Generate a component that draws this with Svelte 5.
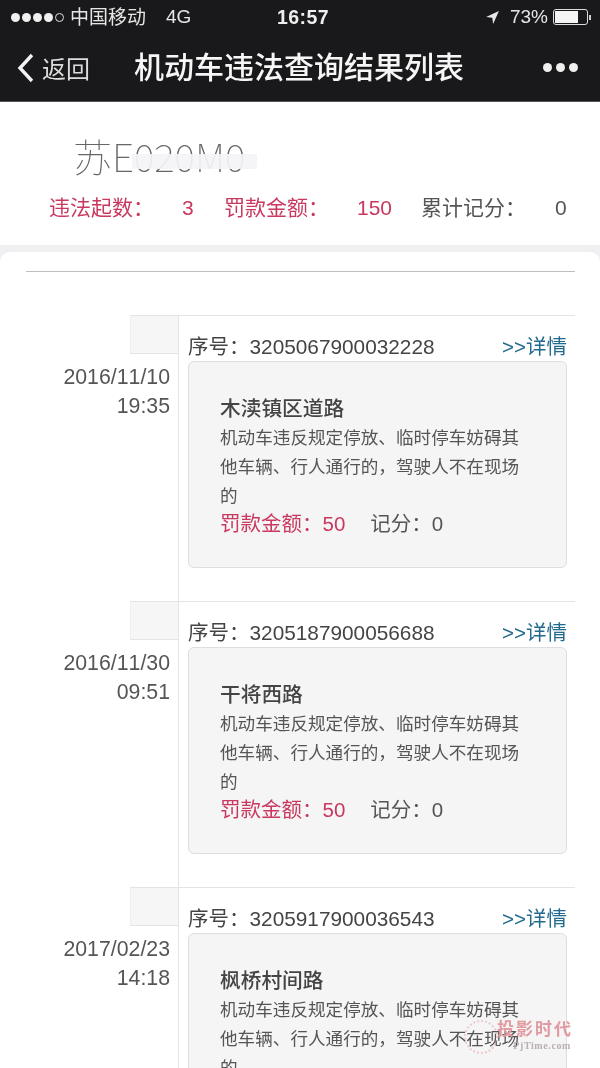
<script lang="ts">
    type Violation = {
        serial: string;
        date: string;
        time: string;
        road: string;
    };

    const colon = "\uFF1A";
    const reason = "机动车违反规定停放、临时停车妨碍其他车辆、行人通行的\uFF0C驾驶人不在现场的";

    const violations: Violation[] = [
        { serial: "3205067900032228", date: "2016/11/10", time: "19:35", road: "木渎镇区道路" },
        { serial: "3205187900056688", date: "2016/11/30", time: "09:51", road: "干将西路" },
        { serial: "3205917900036543", date: "2017/02/23", time: "14:18", road: "枫桥村间路" },
    ];
</script>

<div class="page">
    <header class="topbar">
        <div class="status">
            <div class="status-left">
                <span class="signal">
                    <i></i><i></i><i></i><i></i><i class="empty"></i>
                </span>
                <span class="carrier">中国移动</span>
                <span class="net">4G</span>
            </div>
            <div class="clock">16:57</div>
            <div class="status-right">
                <svg class="arrow" viewBox="0 0 14 14" width="15" height="15">
                    <path d="M13 1 L1 6.6 L6.8 7.2 L7.6 13 Z" fill="#e8e8e8" />
                </svg>
                <span>73%</span>
                <span class="battery"><span class="level"></span></span>
                <span class="nub"></span>
            </div>
        </div>
        <div class="nav">
            <div class="back">
                <svg viewBox="0 0 18 30" width="18" height="30">
                    <path d="M15 2 L3 15 L15 28" fill="none" stroke="#f2f2f2" stroke-width="3.4" />
                </svg>
                <span>返回</span>
            </div>
            <h1>机动车违法查询结果列表</h1>
            <div class="more"><i></i><i></i><i></i></div>
        </div>
    </header>

    <section class="summary">
        <div class="plate">
            苏E020M0
            <span class="smudge"></span>
        </div>
        <div class="totals">
            <span class="red">违法起数{colon}</span>
            <span class="red count-a">3</span>
            <span class="red">罚款金额{colon}</span>
            <span class="red count-b">150</span>
            <span>累计记分{colon}</span>
            <span class="count-c">0</span>
        </div>
    </section>

    <section class="panel">
        <div class="rule"></div>
        {#each violations as v}
            <article class="entry">
                <div class="when">
                    <div class="tab"></div>
                    <div class="stamp">{v.date}</div>
                    <div class="stamp">{v.time}</div>
                </div>
                <div class="body">
                    <div class="head">
                        <span>序号{colon}<span class="serial">{v.serial}</span></span>
                        <span class="link">&gt;&gt;详情</span>
                    </div>
                    <div class="card">
                        <div class="road">{v.road}</div>
                        <p class="reason">{reason}</p>
                        <div class="fine">
                            <span class="red">罚款金额{colon}50</span>
                            <span>记分{colon}0</span>
                        </div>
                    </div>
                </div>
            </article>
        {/each}
    </section>

    <div class="watermark">
        <span class="ring"></span>
        <div class="wm-cn">投影时代</div>
        <div class="wm-en">PjTime.com</div>
    </div>
</div>

<style>
    :global(body) {
        margin: 0;
        background: #fff;
    }

    .page {
        position: relative;
        width: 600px;
        height: 1068px;
        overflow: hidden;
        background: #f0f0f2;
        font-family: "Liberation Sans", "Noto Sans CJK SC", sans-serif;
        color: #444;
        filter: blur(0.35px);
    }

    .topbar {
        height: 102px;
        background: #19191b;
        border-bottom: 1px solid #555;
        box-sizing: border-box;
        color: #f2f2f2;
    }

    .status {
        display: grid;
        grid-template-columns: 1fr auto 1fr;
        align-items: center;
        height: 34px;
        padding: 0 9px 0 11px;
        font-size: 19px;
        color: #e6e6e6;
    }

    .status-left {
        display: flex;
        align-items: center;
        gap: 6px;
    }

    .signal {
        display: flex;
        gap: 2px;
    }

    .signal i {
        width: 9px;
        height: 9px;
        border-radius: 50%;
        background: #f0f0f0;
        box-sizing: border-box;
    }

    .signal i.empty {
        background: none;
        border: 1px solid #ddd;
    }

    .carrier {
        margin-bottom: 4px;
    }

    .net {
        margin-left: 14px;
    }

    .clock {
        margin-left: 4px;
        font-size: 19.5px;
        font-weight: 700;
        color: #eee;
        letter-spacing: 0.4px;
    }

    .status-right {
        display: flex;
        align-items: center;
        justify-content: flex-end;
        gap: 5px;
    }

    .arrow {
        margin-right: 5px;
    }

    .battery {
        display: block;
        width: 35px;
        height: 16px;
        border: 1px solid #ddd;
        border-radius: 3px;
        padding: 1px;
        box-sizing: border-box;
    }

    .level {
        display: block;
        width: 73%;
        height: 100%;
        background: #f4f4f4;
    }

    .nub {
        width: 2px;
        height: 5px;
        margin-left: -4px;
        background: #ccc;
    }

    .nav {
        display: flex;
        align-items: center;
        height: 67px;
        padding-left: 17px;
    }

    .back {
        display: flex;
        align-items: center;
        gap: 7px;
        width: 117px;
        flex-shrink: 0;
        font-size: 24px;
        color: #dcdcdc;
    }

    .nav h1 {
        margin: 0;
        font-size: 30px;
        font-weight: 500;
        line-height: 1;
        color: #f6f6f6;
        white-space: nowrap;
    }

    .more {
        display: flex;
        gap: 4px;
        margin-left: auto;
        margin-right: 22px;
    }

    .more i {
        width: 9px;
        height: 9px;
        border-radius: 50%;
        background: #f0f0f0;
    }

    .summary {
        height: 143px;
        box-sizing: border-box;
        padding-top: 30px;
        background: #fff;
    }

    .plate {
        position: relative;
        width: fit-content;
        margin-left: 73px;
        font-size: 39px;
        line-height: 46px;
        font-weight: 100;
        font-family: "Noto Sans CJK SC", sans-serif;
        color: #666;
    }

    .smudge {
        position: absolute;
        left: 59px;
        right: -12px;
        top: 22px;
        height: 15px;
        background: rgba(244, 244, 246, 0.92);
    }

    .totals {
        display: flex;
        align-items: center;
        margin-top: 15px;
        padding-left: 49px;
        font-size: 21px;
        line-height: 30px;
        color: #555;
    }

    .red {
        color: #c9385e;
    }

    .count-a {
        margin-left: 28px;
        width: 42px;
    }

    .count-b {
        margin-left: 28px;
        width: 64px;
    }

    .count-c {
        margin-left: 29px;
    }

    .panel {
        margin-top: 7px;
        padding: 19px 25px 0 0;
        min-height: 900px;
        background: #fff;
        border-radius: 10px 10px 0 0;
    }

    .rule {
        height: 1px;
        margin-left: 26px;
        margin-bottom: 43px;
        background: #bdbdbd;
    }

    .entry {
        display: flex;
        box-sizing: border-box;
        height: 286px;
        margin-left: 130px;
        border-top: 1px solid #e4e4e4;
    }

    .when {
        width: 48px;
        flex-shrink: 0;
        box-sizing: content-box;
        border-right: 1px solid #e4e4e4;
        font-size: 21.3px;
        line-height: 29px;
        font-kerning: none;
        color: #555;
    }

    .tab {
        height: 37px;
        margin-bottom: 9px;
        background: #f6f6f6;
        border-bottom: 1px solid #e4e4e4;
        box-shadow: inset 1px 0 0 #efefef;
    }

    .stamp {
        display: flex;
        justify-content: flex-end;
        padding-right: 8px;
        white-space: nowrap;
    }

    .body {
        flex: 1;
        padding: 14px 8px 0 9px;
        min-width: 0;
    }

    .head {
        display: flex;
        justify-content: space-between;
        align-items: center;
        height: 30px;
        margin-bottom: 1px;
        font-size: 20.5px;
        color: #444;
    }

    .serial {
        font-size: 20.8px;
    }

    .link {
        color: #236b8e;
    }

    .card {
        height: 207px;
        box-sizing: border-box;
        padding: 31px 32px 0 31px;
        background: #f5f5f6;
        border: 1px solid #dedede;
        border-radius: 6px;
    }

    .road {
        font-size: 20.7px;
        line-height: 31px;
        font-weight: 500;
        color: #444;
    }

    .reason {
        margin: 0;
        font-size: 17.6px;
        line-height: 29px;
        color: #555;
    }

    .fine {
        display: flex;
        gap: 25px;
        font-size: 20.5px;
        line-height: 28px;
        margin-top: -1px;
        color: #555;
    }

    .watermark {
        position: absolute;
        left: 490px;
        top: 1018px;
        width: 104px;
        color: #e09aa0;
    }

    .ring {
        position: absolute;
        left: -26px;
        top: 2px;
        width: 30px;
        height: 30px;
        border: 2px dotted rgba(224, 140, 140, 0.4);
        border-radius: 50%;
    }

    .wm-cn {
        font-family: "Noto Sans CJK SC", sans-serif;
        font-size: 17px;
        line-height: 20px;
        font-weight: 700;
        letter-spacing: 2px;
        padding-left: 7px;
    }

    .wm-en {
        font-family: "Liberation Serif", serif;
        font-size: 10px;
        line-height: 12px;
        margin-top: 2px;
        font-weight: 700;
        letter-spacing: 0.6px;
        text-align: right;
        padding-right: 23px;
        color: #b9b0b0;
    }
</style>
